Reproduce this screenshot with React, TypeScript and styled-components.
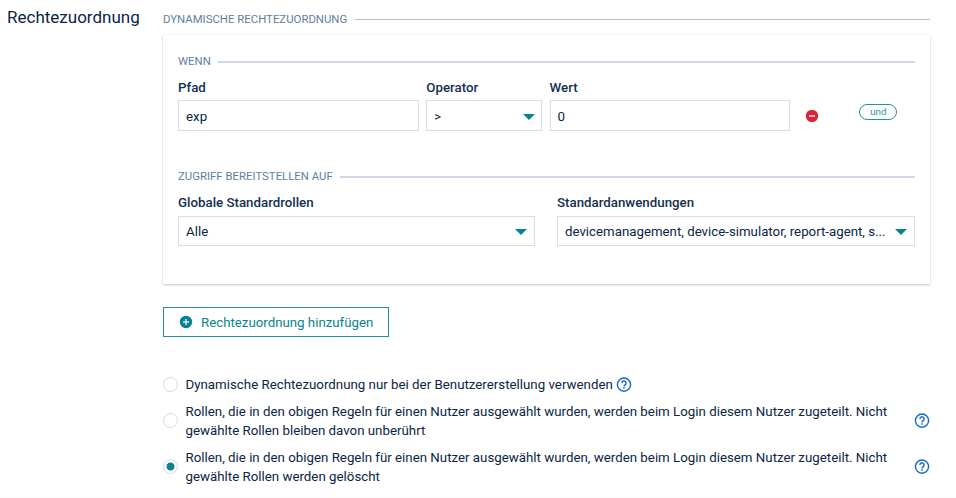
import React from 'react';
import styled, { createGlobalStyle } from 'styled-components';

const GlobalStyle = createGlobalStyle`
  * { box-sizing: border-box; }
  body {
    margin: 0;
    background: #fff;
    color: #14304f;
    font-family: Roboto, "Liberation Sans", sans-serif;
    font-size: 13.3px;
    overflow: hidden;
  }
`;

const Page = styled.main`
  display: grid;
  grid-template-columns: 156px 767px;
  height: 498px;
  padding-left: 7px;
  border-bottom: 1px solid #f8f8f8;
`;

const Title = styled.h1`
  margin: 7px 0 0;
  font-size: 17px;
  line-height: 20px;
  font-weight: 400;
  color: #0b2545;
`;

const Content = styled.div`
  padding-top: 9px;
`;

const Legend = styled.div<{ $thick?: boolean }>`
  display: flex;
  align-items: flex-start;
  gap: 7.5px;
  height: 20px;
  font-size: 11.38px;
  line-height: ${p => (p.$thick ? 18 : 20)}px;
  color: #5f7f9f;
  white-space: nowrap;
  &::after {
    content: "";
    flex: 1;
    align-self: center;
    height: ${p => (p.$thick ? 2 : 1)}px;
    background: ${p => (p.$thick ? '#d1d7e5' : '#b4bcd4')};
  }
`;

const Card = styled.section`
  height: 249px;
  margin-top: 6px;
  padding: 17px 15px 0;
  box-shadow: 0 1px 2px rgba(20, 48, 79, 0.24), 0 0 1px rgba(20, 48, 79, 0.16);
`;

const RuleRow = styled.div`
  display: grid;
  grid-template-columns: 241px 116px 240.5px 1fr;
  column-gap: 7.3px;
  height: 95px;
`;

const AccessRow = styled.div`
  display: grid;
  grid-template-columns: 357px 358px;
  justify-content: space-between;
`;

const Label = styled.label<{ $tall?: boolean }>`
  display: block;
  height: ${p => (p.$tall ? 29 : 28)}px;
  padding-top: 6px;
  font-weight: 500;
  line-height: 20px;
`;

const Box = styled.div<{ $low?: boolean }>`
  display: flex;
  align-items: center;
  justify-content: space-between;
  height: ${p => (p.$low ? 30 : 31)}px;
  padding: ${p => (p.$low ? '2px 7px 0' : '2px 6px 0 7px')};
  border: 1px solid #d8dee7;
  line-height: 20px;
  color: #0b2545;
`;

const Value = styled.span`
  overflow: hidden;
  text-overflow: ellipsis;
  white-space: nowrap;
  max-width: 325px;
  font-size: 13.27px;
`;

const Caret = styled.span`
  border: 6px solid transparent;
  border-top-color: #088490;
  border-bottom: 0;
`;

const Actions = styled.div`
  display: flex;
  align-items: flex-start;
  padding: 32px 0 0 8px;
`;

const RemoveButton = styled.button`
  display: flex;
  margin: 5px 0 0;
  padding: 0;
  border: 0;
  background: none;
`;

const Pill = styled.button`
  width: 38px;
  height: 16px;
  margin-left: 40px;
  padding: 0;
  border: 1px solid #26909b;
  border-radius: 8px;
  background: none;
  color: #26909b;
  font: 9.75px/14px Roboto, sans-serif;
`;

const AddButton = styled.button`
  display: flex;
  align-items: center;
  gap: 8px;
  width: 226px;
  height: 30px;
  margin: 23px 0 38px;
  padding: 2px 0 0 15px;
  border: 1px solid #26909b;
  background: none;
  color: #088490;
  font: 13.28px/20px Roboto, sans-serif;
  & > svg {
    margin-bottom: 2px;
  }
`;

const Options = styled.div`
  display: flex;
  flex-direction: column;
`;

const Option = styled.label<{ $short?: boolean }>`
  display: flex;
  align-items: center;
  height: ${p => (p.$short ? 19 : 38)}px;
  margin-bottom: 8px;
  line-height: 19px;
  color: #0b2545;
  & > svg {
    flex: none;
  }
`;

const Radio = styled.span<{ $checked?: boolean; $raised?: boolean }>`
  flex: none;
  width: 15px;
  height: 15px;
  margin: 0 7.5px ${p => (p.$raised ? 1 : 0)}px 0;
  border: 1px solid #d4dae4;
  border-radius: 50%;
  background: ${p => (p.$checked ? 'radial-gradient(circle, #088490 3.7px, transparent 4.3px)' : '#fff')};
`;

const OptionText = styled.span<{ $wide?: boolean }>`
  width: ${p => (p.$wide ? '728.5px' : 'auto')};
  margin-right: ${p => (p.$wide ? 0 : 3)}px;
  white-space: nowrap;
`;

const RoundIcon = ({ color, plus }: { color: string; plus?: boolean }) => (
  <svg width="14" height="14" viewBox="0 0 14 14">
    <circle cx="7" cy="7" r="6.2" fill={color} />
    <path d={plus ? 'M4 7h6M7 4v6' : 'M4 7h6'} stroke="#fff" strokeOpacity="0.85" strokeWidth="1.4" />
  </svg>
);

const HelpIcon = () => (
  <svg width="16" height="16" viewBox="0 0 16 16" fill="none" stroke="#1469c7">
    <circle cx="8" cy="7.6" r="6.6" strokeWidth="1.4" />
    <path d="M5.9 5.9a2.1 2.1 0 1 1 3.5 1.6C8.6 8.2 8 8.5 8 9.4" strokeWidth="1.4" />
    <path d="M8 10.3v1.5" strokeWidth="1.5" />
  </svg>
);

const assignText = 'Rollen, die in den obigen Regeln für einen Nutzer ausgewählt wurden, werden beim Login diesem Nutzer zugeteilt. Nicht';

export default function App() {
  return (
    <Page>
      <GlobalStyle />
      <Title>Rechtezuordnung</Title>
      <Content>
        <Legend>DYNAMISCHE RECHTEZUORDNUNG</Legend>
        <Card>
          <Legend $thick>WENN</Legend>
          <RuleRow>
            <div>
              <Label>Pfad</Label>
              <Box>exp</Box>
            </div>
            <div>
              <Label>Operator</Label>
              <Box>&gt;<Caret /></Box>
            </div>
            <div>
              <Label>Wert</Label>
              <Box>0</Box>
            </div>
            <Actions>
              <RemoveButton aria-label="Entfernen"><RoundIcon color="#d3283c" /></RemoveButton>
              <Pill>und</Pill>
            </Actions>
          </RuleRow>
          <Legend $thick>ZUGRIFF BEREITSTELLEN AUF</Legend>
          <AccessRow>
            <div>
              <Label $tall>Globale Standardrollen</Label>
              <Box $low>Alle<Caret /></Box>
            </div>
            <div>
              <Label $tall>Standardanwendungen</Label>
              <Box $low><Value>devicemanagement, device-simulator, report-agent, s...</Value><Caret /></Box>
            </div>
          </AccessRow>
        </Card>
        <AddButton><RoundIcon color="#088490" plus />Rechtezuordnung hinzufügen</AddButton>
        <Options>
          <Option $short>
            <Radio />
            <OptionText>Dynamische Rechtezuordnung nur bei der Benutzererstellung verwenden</OptionText>
            <HelpIcon />
          </Option>
          <Option>
            <Radio $raised />
            <OptionText $wide>{assignText}<br />gewählte Rollen bleiben davon unberührt</OptionText>
            <HelpIcon />
          </Option>
          <Option>
            <Radio $checked $raised />
            <OptionText $wide>{assignText}<br />gewählte Rollen werden gelöscht</OptionText>
            <HelpIcon />
          </Option>
        </Options>
      </Content>
    </Page>
  );
}
